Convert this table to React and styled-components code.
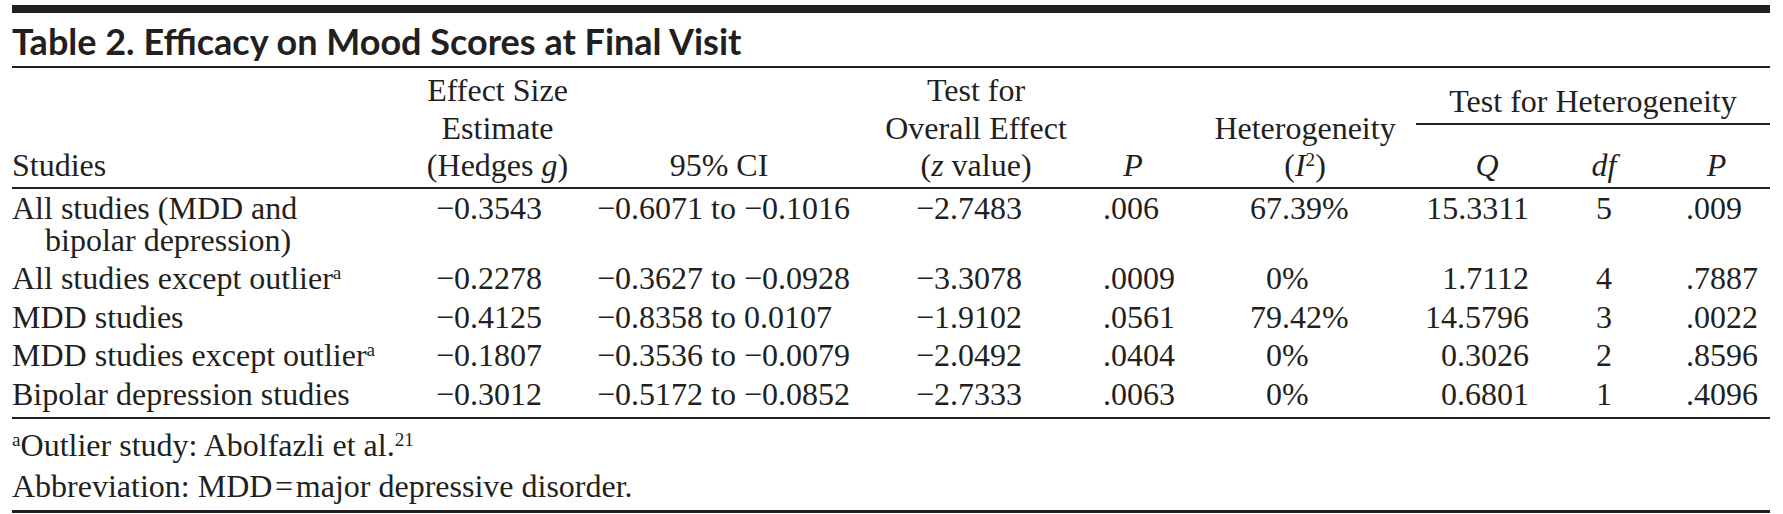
import React from "react";
import styled, { createGlobalStyle } from "styled-components";

const INK = "#231f20";
const COLS = "408px 155px 288px 226px 88px 239px 129px 118px 107px";

const GlobalStyle = createGlobalStyle`
  html, body {
    margin: 0;
    padding: 0;
    background: #ffffff;
  }
  body {
    width: 1783px;
    height: 514px;
    overflow: hidden;
  }
`;

const Page = styled.div`
  padding: 5px 13px 0 12px;
  color: ${INK};
  font-family: "Liberation Serif", "Times New Roman", serif;
`;

const TableFrame = styled.section`
  width: 1758px;
  border-top: 8px solid ${INK};
  border-bottom: 3px solid ${INK};
`;

const Caption = styled.h2`
  margin: 0;
  padding: 6px 0 3px;
  font-family: Lato, "Open Sans", sans-serif;
  font-weight: 700;
  font-size: 36px;
  line-height: 44px;
  border-bottom: 2px solid ${INK};
`;

const HeadGrid = styled.div`
  display: grid;
  grid-template-columns: ${COLS};
  grid-template-rows: auto auto;
  padding-top: 4px;
  border-bottom: 2px solid ${INK};
  font-size: 32px;
  line-height: 37.5px;
`;

const HeadCell = styled.div`
  grid-column: ${(p) => p.$col};
  grid-row: ${(p) => p.$row || "1 / span 2"};
  align-self: end;
  text-align: ${(p) => p.$align || "center"};
  padding: ${(p) => p.$pt || 0}px 0 2px ${(p) => p.$pl || 0}px;
`;

const SpanHead = styled.div`
  grid-column: 7 / span 3;
  grid-row: 1;
  align-self: end;
  text-align: center;
  padding-bottom: 3px;
  border-bottom: 2px solid ${INK};
`;

const Body = styled.div`
  padding-bottom: 4px;
  border-bottom: 2px solid ${INK};
  font-size: 32px;
  line-height: 32px;
`;

const Row = styled.div`
  display: grid;
  grid-template-columns: ${COLS};
  padding: 3px 0 3.5px;
`;

const Cell = styled.div`
  white-space: nowrap;
  text-align: ${(p) => p.$align || "left"};
  padding-left: ${(p) => p.$pl || 0}px;
  padding-right: ${(p) => p.$pr || 0}px;
`;

const Wrapped = styled.span`
  display: block;
  padding-left: ${(p) => p.$indent}px;
`;

const Sup = styled.sup`
  font-size: 0.6em;
  line-height: 0;
  vertical-align: 0.5em;
`;

const Notes = styled.div`
  font-size: 32px;
  line-height: 41px;
  padding: 6px 0 3px;
`;

const Note = styled.p`
  margin: 0;
`;

const rows = [
  {
    study: ["All studies (MDD and", "bipolar depression)"],
    g: "\u22120.3543",
    ci: "\u22120.6071 to \u22120.1016",
    z: "\u22122.7483",
    p: ".006",
    i2: "67.39%",
    q: "15.3311",
    df: "5",
    hp: ".009",
  },
  {
    study: ["All studies except outlier"],
    note: "a",
    g: "\u22120.2278",
    ci: "\u22120.3627 to \u22120.0928",
    z: "\u22123.3078",
    p: ".0009",
    i2: "0%",
    q: "1.7112",
    df: "4",
    hp: ".7887",
  },
  {
    study: ["MDD studies"],
    g: "\u22120.4125",
    ci: "\u22120.8358 to 0.0107",
    z: "\u22121.9102",
    p: ".0561",
    i2: "79.42%",
    q: "14.5796",
    df: "3",
    hp: ".0022",
  },
  {
    study: ["MDD studies except outlier"],
    note: "a",
    g: "\u22120.1807",
    ci: "\u22120.3536 to \u22120.0079",
    z: "\u22122.0492",
    p: ".0404",
    i2: "0%",
    q: "0.3026",
    df: "2",
    hp: ".8596",
  },
  {
    study: ["Bipolar depression studies"],
    g: "\u22120.3012",
    ci: "\u22120.5172 to \u22120.0852",
    z: "\u22122.7333",
    p: ".0063",
    i2: "0%",
    q: "0.6801",
    df: "1",
    hp: ".4096",
  },
];

const App = () => {
  return (
    <>
      <GlobalStyle />
      <Page>
        <TableFrame>
          <Caption>Table 2. Efficacy on Mood Scores at Final Visit</Caption>

          <HeadGrid>
            <HeadCell $col={1} $align="left">Studies</HeadCell>
            <HeadCell $col={2}>
              Effect Size
              <br />
              Estimate
              <br />
              (Hedges <i>g</i>)
            </HeadCell>
            <HeadCell $col={3}>95% CI</HeadCell>
            <HeadCell $col={4}>
              Test for
              <br />
              Overall Effect
              <br />
              (<i>z</i> value)
            </HeadCell>
            <HeadCell $col={5}>
              <i>P</i>
            </HeadCell>
            <HeadCell $col={6} $pl={17}>
              Heterogeneity
              <br />
              (<i>I</i>
              <Sup>2</Sup>)
            </HeadCell>
            <SpanHead>Test for Heterogeneity</SpanHead>
            <HeadCell $col={7} $row={2} $pt={11} $pl={13}>
              <i>Q</i>
            </HeadCell>
            <HeadCell $col={8} $row={2} $pt={11}>
              <i>df</i>
            </HeadCell>
            <HeadCell $col={9} $row={2} $pt={11}>
              <i>P</i>
            </HeadCell>
          </HeadGrid>

          <Body>
            {rows.map((r) => (
              <Row key={r.study[0]}>
                <Cell>
                  {r.study[0]}
                  {r.note && <Sup>{r.note}</Sup>}
                  {r.study[1] && <Wrapped $indent={33}>{r.study[1]}</Wrapped>}
                </Cell>
                <Cell $pl={16}>{r.g}</Cell>
                <Cell $pl={22}>{r.ci}</Cell>
                <Cell $pl={53}>{r.z}</Cell>
                <Cell $pl={14}>{r.p}</Cell>
                <Cell $pl={r.i2.length < 4 ? 89 : 73}>{r.i2}</Cell>
                <Cell $align="right" $pr={16}>
                  {r.q}
                </Cell>
                <Cell $align="center">{r.df}</Cell>
                <Cell $pl={23}>{r.hp}</Cell>
              </Row>
            ))}
          </Body>

          <Notes>
            <Note>
              <Sup>a</Sup>Outlier study: Abolfazli et al.<Sup>21</Sup>
            </Note>
            <Note>Abbreviation: MDD{"\u200a=\u200a"}major depressive disorder.</Note>
          </Notes>
        </TableFrame>
      </Page>
    </>
  );
};

export default App;
